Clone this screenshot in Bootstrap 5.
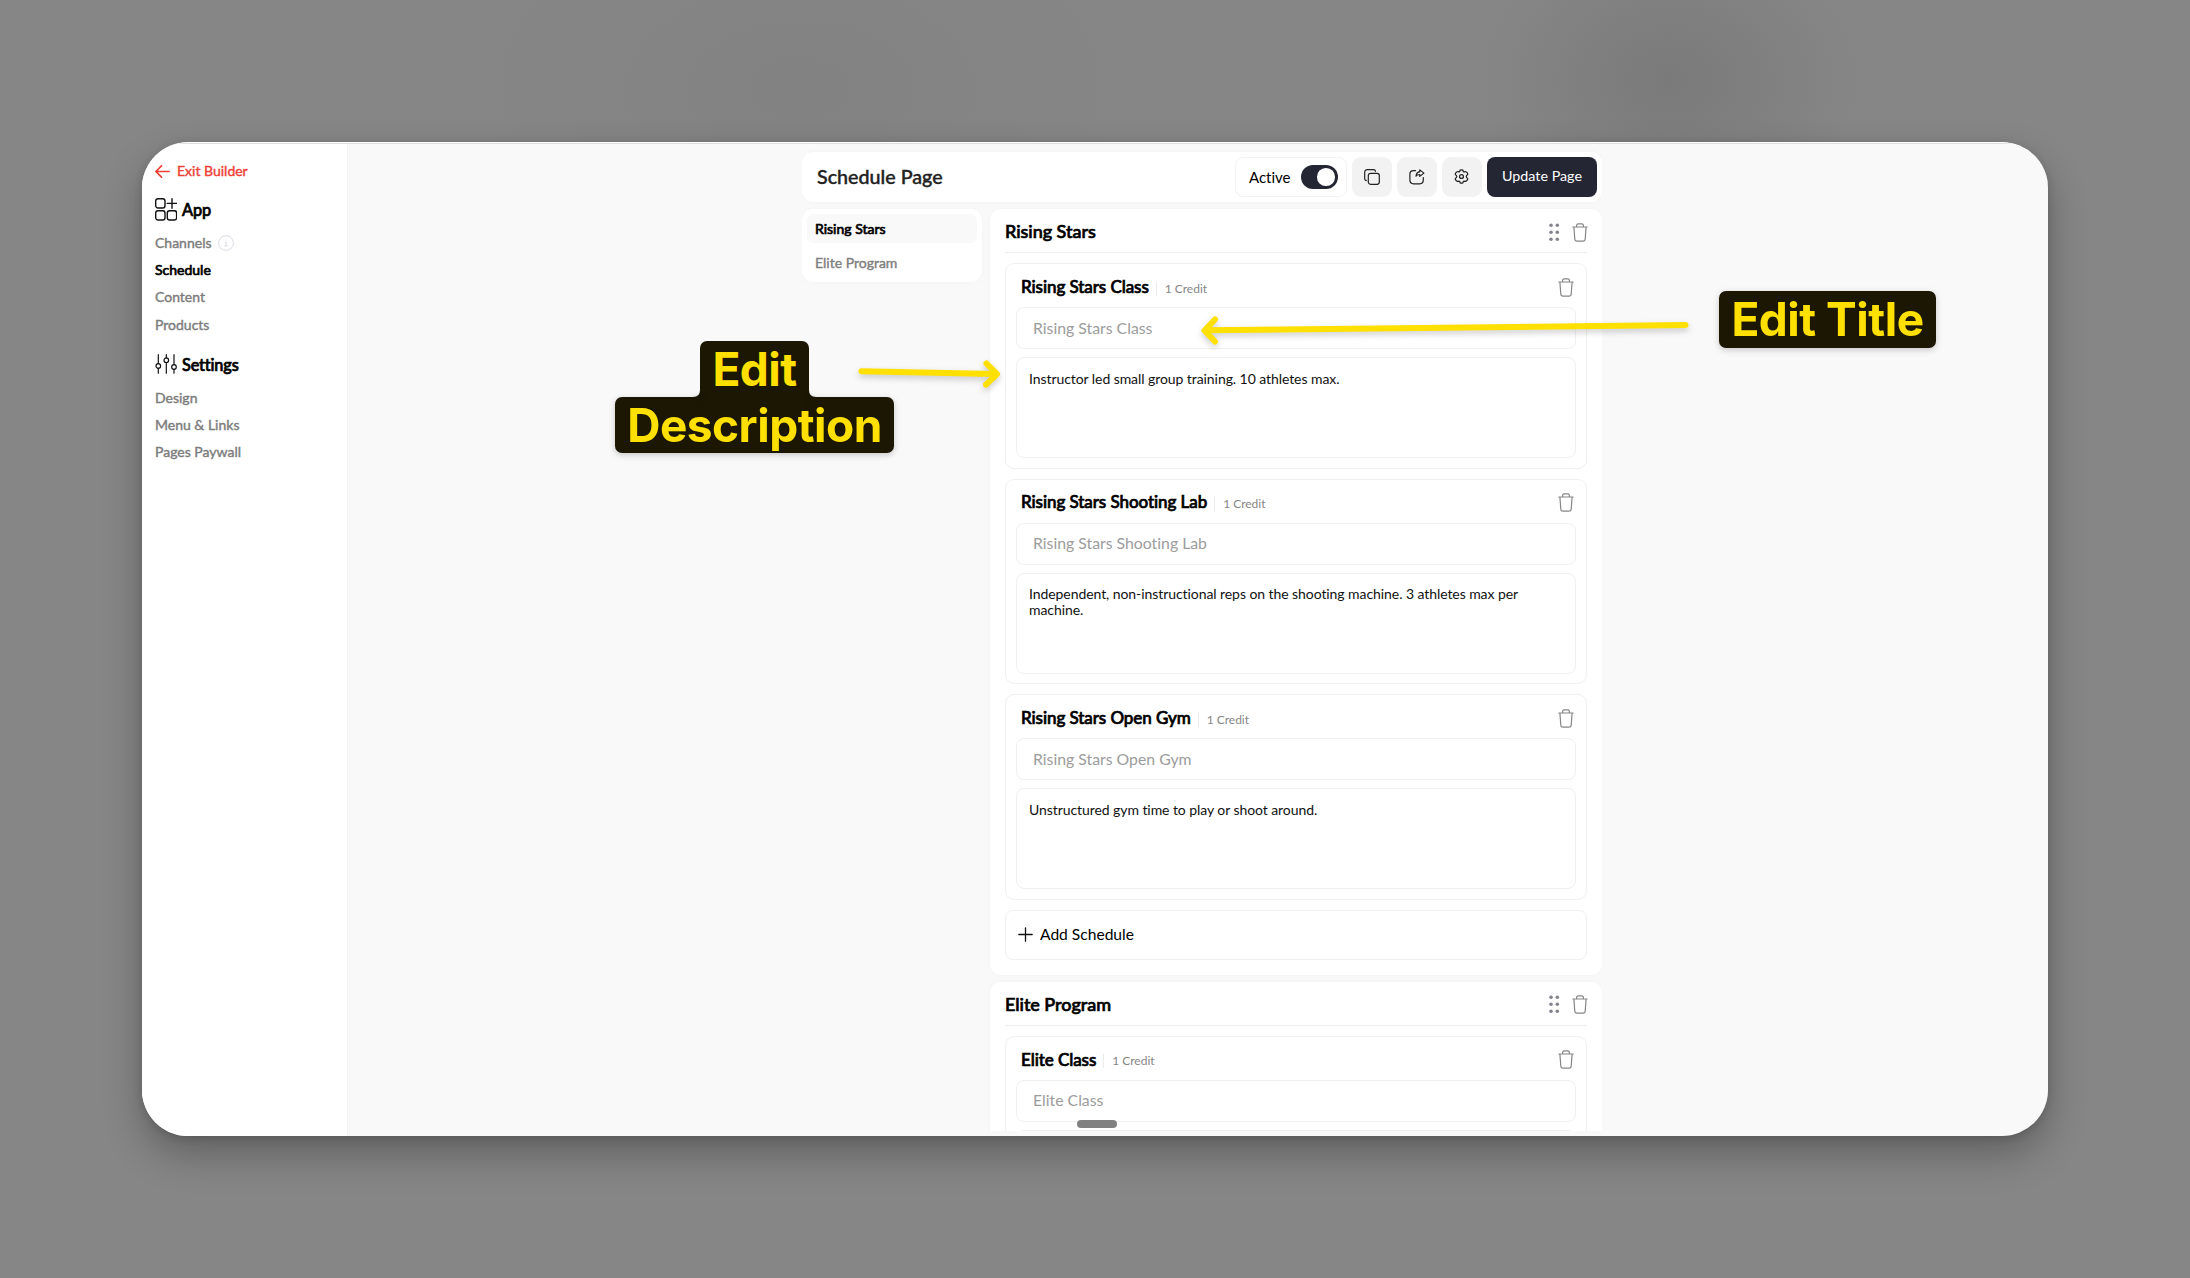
<!DOCTYPE html>
<html lang="en">
<head>
<meta charset="utf-8">
<title>Schedule Page</title>
<link href="https://cdn.jsdelivr.net/npm/bootstrap@5.3.0/dist/css/bootstrap.min.css" rel="stylesheet">
<script src="https://cdn.jsdelivr.net/npm/bootstrap@5.3.0/dist/js/bootstrap.bundle.min.js"></script>
<style>
body{width:2190px;height:1278px;overflow:hidden;padding:142px;font-family:Lato,"Liberation Sans",sans-serif;color:#000;line-height:1.2;font-variant-ligatures:none;
background:radial-gradient(ellipse 190px 150px at 1670px 80px,#7a7a7a 0,#7e7e7e 35%,rgba(134,134,134,0) 100%),radial-gradient(ellipse 330px 200px at 800px 90px,#828282 0,rgba(134,134,134,0) 100%),#868686}
.app-window{width:1906px;height:994px;border-radius:46px;background:#f9f9f9;box-shadow:0 18px 38px rgba(0,0,0,.28),0 2px 8px rgba(0,0,0,.14);border-top:1px solid #fff}
.topline{height:1px;background:#dedede}
.side{width:206px;background:#fff;border-right:1px solid #f2f2f2;padding:17.6px 0 0 13px}
.heavy{-webkit-text-stroke:.4px currentColor}
.heavier{-webkit-text-stroke:.7px currentColor}
.side a{display:flex;align-items:center;height:27.3px;font-size:14px;color:#7c7c7c;text-decoration:none}
.side a.exit{color:#ee4036;gap:7px;height:20px}
.side a.current{color:#000}
.side h2{font-size:16.3px;margin:0;gap:5px;height:24px;letter-spacing:-.15px}
.side .h-app{margin-top:16.4px}
.side .h-settings{margin-top:13.6px}
.side .links-app{margin-top:7.6px}
.side .links-settings{margin-top:8.2px}
.main-col{width:800px;margin-left:454px;padding-top:8px;height:987px;overflow:hidden;flex:none;overflow:clip;overflow-clip-margin:0}
.soft{background:#fff;border-radius:11px;box-shadow:0 0 5px rgba(0,0,0,.035)}
.topbar{height:50px;padding:0 5px 0 15px;gap:5px}
.topbar h1{font-size:19.7px;color:#222;margin:0 0 1px}
.columns-row{margin-top:7px;gap:8px}
.toggle-box{width:112px;height:40px;border:1px solid #f2f2f2;border-radius:8px;padding:0 8px 0 13px;font-size:15px}
.switch{width:37px;height:24px;border-radius:12px;background:#252634;padding:0 3.5px}
.switch i{width:17.5px;height:17.5px;border-radius:50%;background:#fff}
.tool{width:40px;height:40px;border-radius:9px;background:#f2f2f2;border:0;padding:0 1px 1px 0}
.update{width:110px;height:40px;border-radius:8px;background:#252634;color:#fff;border:0;padding:0 0 2px;font-size:14.3px}
.tabs{width:180px;height:73px;padding:5px}
.tabs a{height:29px;border-radius:6px;padding:1.5px 0 0 8px;font-size:14px;color:#808080;text-decoration:none;margin-bottom:5px}
.tabs a.current{background:#f9f9f9;color:#000}
.panel{width:612px;padding:0 15px 15px;margin-bottom:7px}
.panel>header{height:44px;border-bottom:1px solid #efefef;padding-top:3px;margin-bottom:10px}
.panel>header h2{font-size:18px;margin:0;letter-spacing:-.03px}
.panel>header .dots{margin-right:7px}
.panel>header .bin{margin-right:-1px}
.sched{height:205.67px;border:1px solid #f0f0f0;border-radius:9px;padding:0 10px;margin-bottom:10px}
.sched>header{height:43px;padding:3px 2px 0 5px}
.sched h3{font-size:17px;margin:0;letter-spacing:-.07px}
.credit{font-size:12px;color:#868686;border-left:1px solid #ececec;margin-left:7px;padding-left:8px;line-height:14px;margin-top:3px}
.field,.area{border:1px solid #f0f0f0;border-radius:8px}
.field{height:42px;padding:0 16px;font-size:15.8px;color:#9c9c9c;margin-bottom:8px}
.area{height:101px;padding:12.5px 12px;font-size:14px;line-height:16px;color:#111;letter-spacing:-.07px}
.add{height:50px;border:1px solid #f0f0f0;border-radius:8px;padding:0 0 1px 12px;gap:7px;font-size:15.6px}
.callout-tag{position:absolute;font:700 46px/56px Inter,sans-serif;letter-spacing:-.5px;color:#ffe000;background:#1c1703;border-radius:7px;text-align:center;filter:drop-shadow(0 2px 3px rgba(0,0,0,.2))}
.tag-title{left:1719px;top:291px;width:217px;height:57px;line-height:57px}
.tag-desc{left:615px;top:397px;width:279px}
.tag-edit{left:700px;top:341px;width:109px;height:60px;border-radius:7px 7px 0 0;filter:none}
.arrows{position:absolute;left:0;top:0;filter:drop-shadow(0 3px 3px rgba(0,0,0,.2))}
.grip{position:absolute;left:1077px;top:1120px;width:40px;height:8px;border-radius:4px;background:#808080}
svg{flex:none}
</style>
</head>
<body>
<svg width="0" height="0" class="position-absolute">
<symbol id="trash" viewBox="0 0 16 19"><g fill="none" stroke="#858585" stroke-width="1.2" stroke-linecap="round" stroke-linejoin="round"><path d="M.8 4h14.400M4.600 3.800V2.600c0-1 .6-1.800 1.600-1.800h3.600c1 0 1.600.8 1.600 1.800v1.200M1.900 4.200l.9 11.800c.1 1.300.9 2.100 2.200 2.100h6c1.300 0 2.100-.8 2.200-2.100L14.100 4.200"/></g></symbol>
<symbol id="dots" viewBox="0 0 11 19"><g fill="#83838c"><circle cx="2" cy="2.300" r="1.750"/><circle cx="8.300" cy="2.300" r="1.750"/><circle cx="2" cy="9.300" r="1.750"/><circle cx="8.300" cy="9.300" r="1.750"/><circle cx="2" cy="16.300" r="1.750"/><circle cx="8.300" cy="16.300" r="1.750"/></g></symbol>
</svg>
<div class="app-window overflow-hidden d-flex flex-column">
<div class="topline"></div>
<div class="d-flex flex-grow-1">
<nav class="side flex-shrink-0">
<a class="exit heavy" href="#"><svg width="15" height="14" viewBox="0 0 15 14" fill="none" stroke="#ee4036" stroke-width="1.700" stroke-linecap="round" stroke-linejoin="round"><path d="M14.200 6.500H1M6.500.9.900 6.500l5.600 5.700"/></svg>Exit Builder</a>
<h2 class="h-app d-flex align-items-center heavier"><svg width="22" height="23" viewBox="0 0 22 23" fill="none" stroke="#111" stroke-width="1.400" stroke-linecap="round"><rect x=".7" y=".7" width="9.300" height="9.300" rx="2.200"/><rect x=".7" y="12.700" width="9.300" height="9.300" rx="2.200"/><rect x="12.300" y="12.700" width="9.300" height="9.300" rx="2.200"/><path d="M17 .7v9.600M12.200 5.400h9.300"/></svg>App</h2>
<div class="links-app">
<a class="heavy" href="#">Channels<svg width="16" height="16" viewBox="0 0 16 16" fill="none" stroke="#e2e2e8" stroke-width="1.100" style="margin-left:6.500px"><circle cx="8" cy="8" r="7.400"/><path d="M6.700 7.300h1.500v3.500M6.400 10.900h3.400M7.500 5h1"/></svg></a>
<a class="current heavier" href="#">Schedule</a>
<a class="heavy" href="#">Content</a>
<a class="heavy" href="#">Products</a>
</div>
<h2 class="h-settings d-flex align-items-center heavier"><svg width="22" height="20" viewBox="0 0 22 20" fill="none" stroke="#111" stroke-width="1.200" stroke-linecap="round"><path d="M3.300.7v9M3.300 14.300v4.900M11.300.7v3.200M11.300 8.500v10.700M19 .7v10M19 15.300v3.900"/><circle cx="3.300" cy="12" r="2.300"/><circle cx="11.300" cy="6.200" r="2.300"/><circle cx="19" cy="13" r="2.300"/></svg>Settings</h2>
<div class="links-settings">
<a class="heavy" href="#">Design</a>
<a class="heavy" href="#">Menu &amp; Links</a>
<a class="heavy" href="#">Pages Paywall</a>
</div>
</nav>
<main class="main-col">
<div class="topbar soft d-flex align-items-center">
<h1 class="heavy me-auto">Schedule Page</h1>
<div class="toggle-box d-flex align-items-center justify-content-between">Active<span class="switch d-flex align-items-center justify-content-end"><i></i></span></div>
<button class="tool d-flex align-items-center justify-content-center"><svg width="16" height="16" viewBox="0 0 16 16" fill="none" stroke="#222" stroke-width="1.200"><rect x="4.300" y="4.300" width="11" height="11" rx="2.200"/><path d="M2.800 11.600C1.400 11.600.7 10.800.7 9.500v-6C.7 1.600 1.600.7 3.400.7h6c1.300 0 2.100.7 2.100 2"/></svg></button>
<button class="tool d-flex align-items-center justify-content-center"><svg width="16" height="16" viewBox="0 0 16 16" fill="none" stroke="#222" stroke-width="1.200" stroke-linejoin="round" stroke-linecap="round"><path d="M6.500 1.700H4.500C2 1.700.9 2.800.9 5.300v5.800c0 2.500 1.100 3.700 3.600 3.700h6.200c2.500 0 3.600-1.200 3.600-3.700V8.500M7 7.200c.3-2.700 1.600-4.100 3.800-4.500V.9l4.100 3.200-4.100 3.300V5.500C9 5.500 7.900 6 7 7.200Z"/></svg></button>
<button class="tool d-flex align-items-center justify-content-center"><svg width="15" height="15" viewBox="0 0 16 16" fill="none" stroke="#222" stroke-width="1.300" stroke-linejoin="round"><circle cx="8" cy="8" r="2.100"/><path d="M6.540 1.150Q8 .5 9.460 1.150 9.900 3.300 10.850 3.060 12 2.400 13.200 3.300 14.800 4.400 14.660 5.840 13 7 13 8 13 9 14.660 10.160 14.800 11.600 13.200 12.700 12 13.600 10.850 12.940 9.900 12.700 9.460 14.850 8 15.500 6.540 14.850 6.100 12.700 5.150 12.940 4 13.600 2.800 12.700 1.200 11.600 1.340 10.160 3 9 3 8 3 7 1.340 5.840 1.200 4.400 2.800 3.300 4 2.400 5.150 3.060 6.100 3.300 6.540 1.150Z"/></svg></button>
<button class="update">Update Page</button>
</div>
<div class="columns-row d-flex align-items-start">
<div class="tabs soft">
<a class="current heavier d-flex align-items-center" href="#">Rising Stars</a>
<a class="heavy d-flex align-items-center" href="#">Elite Program</a>
</div>
<div>
<section class="panel soft">
<header class="d-flex align-items-center"><h2 class="heavier me-auto">Rising Stars</h2><svg class="dots" width="16" height="19"><use href="#dots" width="11" height="19"/></svg><svg class="bin" width="16" height="19"><use href="#trash"/></svg></header>
<article class="sched"><header class="d-flex align-items-center"><h3 class="heavier">Rising Stars Class</h3><span class="credit me-auto">1 Credit</span><svg width="16" height="19"><use href="#trash"/></svg></header><div class="field d-flex align-items-center">Rising Stars Class</div><div class="area">Instructor led small group training. 10 athletes max.</div></article>
<article class="sched"><header class="d-flex align-items-center"><h3 class="heavier">Rising Stars Shooting Lab</h3><span class="credit me-auto">1 Credit</span><svg width="16" height="19"><use href="#trash"/></svg></header><div class="field d-flex align-items-center">Rising Stars Shooting Lab</div><div class="area">Independent, non-instructional reps on the shooting machine. 3 athletes max per machine.</div></article>
<article class="sched"><header class="d-flex align-items-center"><h3 class="heavier">Rising Stars Open Gym</h3><span class="credit me-auto">1 Credit</span><svg width="16" height="19"><use href="#trash"/></svg></header><div class="field d-flex align-items-center">Rising Stars Open Gym</div><div class="area">Unstructured gym time to play or shoot around.</div></article>
<div class="add d-flex align-items-center"><svg width="15" height="15" viewBox="0 0 15 15" stroke="#111" stroke-width="1.300" stroke-linecap="round"><path d="M7.500.8v13.400M.8 7.500h13.400"/></svg>Add Schedule</div>
</section>
<section class="panel soft">
<header class="d-flex align-items-center"><h2 class="heavier me-auto">Elite Program</h2><svg class="dots" width="16" height="19"><use href="#dots" width="11" height="19"/></svg><svg class="bin" width="16" height="19"><use href="#trash"/></svg></header>
<article class="sched"><header class="d-flex align-items-center"><h3 class="heavier">Elite Class</h3><span class="credit me-auto">1 Credit</span><svg width="16" height="19"><use href="#trash"/></svg></header><div class="field d-flex align-items-center">Elite Class</div><div class="area"></div></article>
</section>
</div>
</div>
</main>
</div>
</div>
<div class="grip"></div>
<div class="callout-tag tag-title">Edit Title</div>
<div class="callout-tag tag-desc">Description</div>
<div class="callout-tag tag-edit">Edit</div>
<svg class="arrows" width="2190" height="500" fill="none" stroke="#ffe000" stroke-width="6" stroke-linecap="round" stroke-linejoin="round"><path d="M861.500 371.200 995 374M986.500 363.500 997 374.200l-11 10.500"/><path d="M1685.500 325 1206 330.300M1215 319.500 1204.500 330.500l10.500 11"/><path stroke="none" fill="#1c1703" d="M693 397q7 0 7-7v8h-7ZM816 397q-7 0-7-7v8h7Z"/></svg>
</body>
</html>
